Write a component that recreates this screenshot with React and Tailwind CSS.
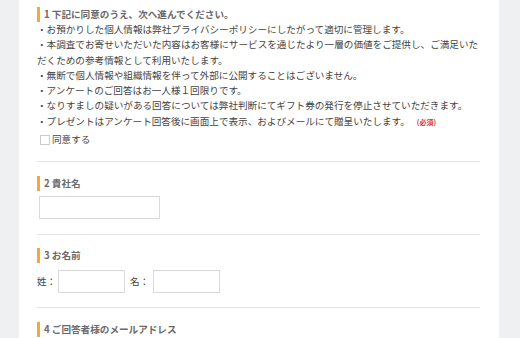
export default function App() {
  const notes = [
    "・お預かりした個人情報は弊社プライバシーポリシーにしたがって適切に管理します。",
    "・本調査でお寄せいただいた内容はお客様にサービスを通じたより一層の価値をご提供し、ご満足いただくための参考情報として利用いたします。",
    "・無断で個人情報や組織情報を伴って外部に公開することはございません。",
    "・アンケートのご回答はお一人様１回限りです。",
    "・なりすましの疑いがある回答については弊社判断にてギフト券の発行を停止させていただきます。",
  ];

  return (
    <div
      className="min-h-screen bg-[#eef0f2] flex justify-start"
      style={{ fontFamily: '"Noto Sans CJK JP", "Noto Sans", sans-serif' }}
    >
      <div className="ml-[19px] w-[480px] bg-white pl-[18px] pr-[19px] pt-[7px] h-[338px] overflow-hidden text-[9.6px] text-[#444]">
        {/* 1 */}
        <div className="border-b border-[#e3e3e3] pb-[14px]">
          <Heading>1 下記に同意のうえ、次へ進んでください。</Heading>
          <div className="leading-[15.3px]">
            {notes.map((n) => (
              <p key={n}>{n}</p>
            ))}
            <p>
              ・プレゼントはアンケート回答後に画面上で表示、およびメールにて贈呈いたします。
              <span className="ml-[7px] text-[7px] font-bold text-[#d33]">(必須)</span>
            </p>
          </div>
          <label className="mt-[2px] ml-[3px] flex items-center gap-[2px] leading-[15px]">
            <span className="w-[10px] h-[10px] border border-[#ccc] bg-white" />
            <span>同意する</span>
          </label>
        </div>

        {/* 2 */}
        <div className="border-b border-[#e3e3e3] pt-[14px] pb-[15px]">
          <Heading>2 貴社名</Heading>
          <div className="mt-[5px] ml-[2px] w-[121px] h-[23px] border border-[#d9d9d9]" />
        </div>

        {/* 3 */}
        <div className="border-b border-[#e3e3e3] pt-[13px] pb-[14px]">
          <Heading>3 お名前</Heading>
          <div className="mt-[7px] flex items-center">
            <span className="w-[21px]">姓：</span>
            <div className="w-[67px] h-[23px] border border-[#d9d9d9]" />
            <span className="ml-[5px] w-[23px]">名：</span>
            <div className="w-[67px] h-[23px] border border-[#d9d9d9]" />
          </div>
        </div>

        {/* 4 */}
        <div className="pt-[14px]">
          <Heading>4 ご回答者様のメールアドレス</Heading>
        </div>
      </div>
    </div>
  );
}

function Heading({ children }) {
  return (
    <div className="flex items-center h-[15px] border-l-[3px] border-[#f0a93b] pl-[4px] font-bold text-[#6a6a6a] leading-[15px]">
      {children}
    </div>
  );
}
